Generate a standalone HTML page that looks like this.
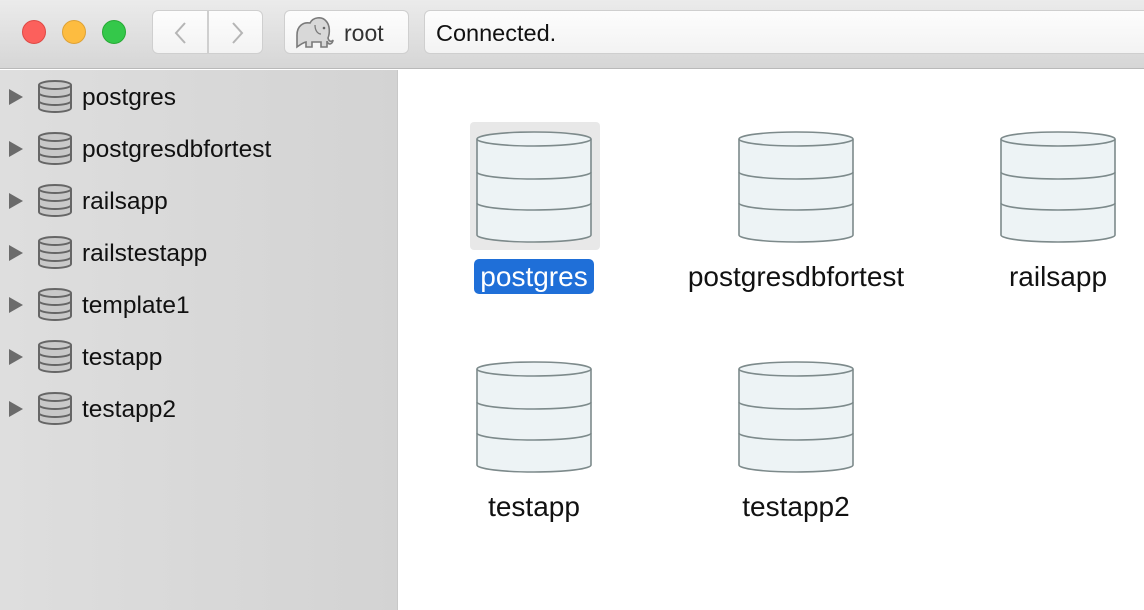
<!DOCTYPE html>
<html><head><meta charset="utf-8"><style>
*{margin:0;padding:0;box-sizing:border-box}
body{width:1144px;height:610px;overflow:hidden;font-family:"Liberation Sans",sans-serif;background:#fff;position:relative}
#tb{position:absolute;left:0;top:0;width:1144px;height:69px;background:linear-gradient(#ebebeb,#d6d6d6);border-bottom:1px solid #b9b9b9}
.dot{position:absolute;top:20px;width:24px;height:24px;border-radius:50%}
.btn{position:absolute;top:10px;height:44px;background:linear-gradient(#fdfdfd,#f3f3f3);border:1px solid #cfcfcf;border-radius:6px}
#side{position:absolute;left:0;top:70px;width:398px;height:540px;background:linear-gradient(90deg,#dedede,#d3d3d3);border-right:1px solid #c8c8c8}
.row{position:absolute;left:0;height:40px;width:398px}
.row .tri{position:absolute;left:9px;top:13px;width:0;height:0;border-left:14px solid #6b6b6b;border-top:8px solid transparent;border-bottom:8px solid transparent}
.row svg{position:absolute;left:37px;top:3px}
.row span{position:absolute;left:82px;top:8px;font-size:24.5px;color:#111}
.ic{position:absolute}
.lbl{position:absolute;font-size:28px;color:#111;white-space:nowrap;text-align:center;line-height:35px;height:35px;border-radius:5px}
</style></head><body>
<div id="tb">
<div class="dot" style="left:22px;background:#fc605c;border:1px solid #de4a45"></div>
<div class="dot" style="left:62px;background:#fdbc40;border:1px solid #dea236"></div>
<div class="dot" style="left:102px;background:#34c84a;border:1px solid #27aa35"></div>
<div class="btn" style="left:152px;width:56px;border-radius:6px 0 0 6px"><svg width="56" height="44"><path d="M32 12 L23 22 L32 32" stroke="#b5b5b5" stroke-width="2" fill="none"/></svg></div>
<div class="btn" style="left:208px;width:55px;border-radius:0 6px 6px 0"><svg width="55" height="44"><path d="M24 12 L33 22 L24 32" stroke="#b5b5b5" stroke-width="2" fill="none"/></svg></div>
<div class="btn" style="left:284px;width:125px"><svg width="50" height="44" style="position:absolute;left:8px;top:0"><path d="M4 36 L4 24 C4 15 10 11 17 12 C20 6 29 5 33 10 C37 14 37 22 35 27 C36 31 39 31 40 29 C40 33 35 35 34 30 L34 36 L28 36 L28 31 L19 31 L19 36 L13 36 L13 31 C9 32 7 34 4 36Z" fill="#d8d8d8" stroke="#7a7a7a" stroke-width="1.6"/><path d="M22 14 C22 20 25 23 28 23" fill="none" stroke="#7a7a7a" stroke-width="1.3"/><circle cx="31" cy="17" r="1.3" fill="#666"/></svg><span style="position:absolute;left:59px;top:9px;font-size:23px;color:#333">root</span></div>
<div class="btn" style="left:424px;width:730px;border-radius:6px 0 0 6px"><span style="position:absolute;left:11px;top:9px;font-size:23.5px;color:#111">Connected.</span></div>
</div>
<div id="side">
</div>
<script>
var s=document.getElementById('side');
var names=['postgres','postgresdbfortest','railsapp','railstestapp','template1','testapp','testapp2'];
var sm='<svg width="36" height="36"><path d="M2 6 A16 4 0 0 1 34 6 L34 29 A16 4 0 0 1 2 29 Z" fill="#c9c9c9" stroke="#666" stroke-width="2"/><path d="M2 6 A16 4 0 0 0 34 6 M2 14 A16 4 0 0 0 34 14 M2 22 A16 4 0 0 0 34 22" fill="none" stroke="#666" stroke-width="2"/></svg>';
names.forEach(function(n,i){s.innerHTML+='<div class="row" style="top:'+(6+52*i)+'px"><div class="tri"></div>'+sm+'<span>'+n+'</span></div>';});
var big='<svg width="116" height="116"><path d="M1 9 A57 7 0 0 1 115 9 L115 105 A57 7 0 0 1 1 105 Z" fill="#edf3f5" stroke="#7d8a8b" stroke-width="1.6"/><path d="M1 9 A57 7 0 0 0 115 9 M1 42 A57 7 0 0 0 115 42 M1 73 A57 7 0 0 0 115 73" fill="none" stroke="#7d8a8b" stroke-width="1.6"/></svg>';
var items=[[534,128,'postgres'],[796,128,'postgresdbfortest'],[1058,128,'railsapp'],[534,358,'testapp'],[796,358,'testapp2']];
var h='<div style="position:absolute;left:470px;top:122px;width:130px;height:128px;background:#e8e8e8;border-radius:4px"></div>';
items.forEach(function(it,i){
 var sel=i==0;
 h+='<div class="ic" style="left:'+(it[0]-58)+'px;top:'+(it[1]+2)+'px">'+big+'</div>';
 if(sel) h+='<div class="lbl" style="left:474px;top:259px;width:120px;background:#1f6fd8;color:#fff">'+it[2]+'</div>';
 else h+='<div class="lbl" style="left:'+(it[0]-150)+'px;top:'+(it[1]+131)+'px;width:300px">'+it[2]+'</div>';
});
document.body.insertAdjacentHTML('beforeend',h);
</script>
</body></html>
